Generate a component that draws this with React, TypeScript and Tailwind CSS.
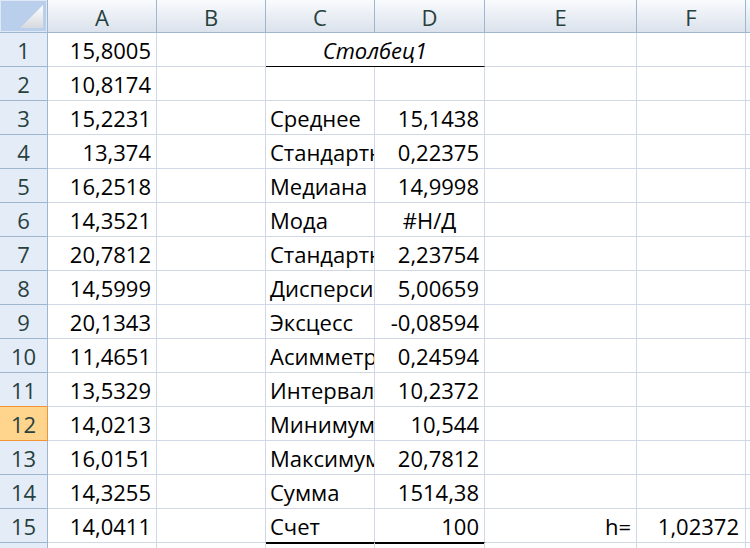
import React from "react";

const A = [
  "15,8005", "10,8174", "15,2231", "13,374", "16,2518", "14,3521", "20,7812", "14,5999",
  "20,1343", "11,4651", "13,5329", "14,0213", "16,0151", "14,3255", "14,0411",
];

const CD: Record<number, [string, string]> = {
  3: ["Среднее", "15,1438"],
  4: ["Стандартная ошибка", "0,22375"],
  5: ["Медиана", "14,9998"],
  6: ["Мода", "#Н/Д"],
  7: ["Стандартное отклонение", "2,23754"],
  8: ["Дисперсия выборки", "5,00659"],
  9: ["Эксцесс", "-0,08594"],
  10: ["Асимметричность", "0,24594"],
  11: ["Интервал", "10,2372"],
  12: ["Минимум", "10,544"],
  13: ["Максимум", "20,7812"],
  14: ["Сумма", "1514,38"],
  15: ["Счет", "100"],
};

const grid = "border-r border-b border-[#d0d7e5]";

function RowHeader({ n }: { n: number }) {
  const selected = n === 12;
  const above = n === 11;
  return (
    <div
      className={
        "w-[48px] shrink-0 border-r border-b flex items-center justify-center text-[#27413e] " +
        (selected
          ? "bg-[#ffd58e] border-r-[#f29436] border-b-[#f29436]"
          : above
          ? "bg-[#e4ecf7] border-r-[#9eb6ce] border-b-[#f29436]"
          : "bg-[#e4ecf7] border-[#9eb6ce]")
      }
    >
      {n}
    </div>
  );
}

function DataRow({ n }: { n: number }) {
  const cd = CD[n];
  const last = n === 15;
  return (
    <div className="flex h-[34px]">
      <RowHeader n={n} />
      <div className={"w-[109px] shrink-0 flex items-center justify-end pr-[5px] " + grid}>{A[n - 1]}</div>
      <div className={"w-[109px] shrink-0 " + grid}></div>
      {n === 1 ? (
        <div className="w-[219px] shrink-0 flex items-center justify-center italic border-r border-r-[#d0d7e5] border-b border-b-black">
          Столбец1
        </div>
      ) : (
        <>
          <div
            className={
              "w-[109px] shrink-0 flex items-center pl-[4px] overflow-hidden whitespace-nowrap " +
              (last
                ? "border-r border-r-[#d0d7e5] border-b border-b-black shadow-[0_1px_0_0_#000]"
                : grid)
            }
          >
            {cd ? cd[0] : ""}
          </div>
          <div
            className={
              "w-[110px] shrink-0 flex items-center overflow-hidden whitespace-nowrap " +
              (cd && cd[1] === "#Н/Д" ? "justify-center " : "justify-end pr-[5px] ") +
              (last
                ? "border-r border-r-[#d0d7e5] border-b border-b-black shadow-[0_1px_0_0_#000]"
                : grid)
            }
          >
            {cd ? cd[1] : ""}
          </div>
        </>
      )}
      <div className={"w-[152px] shrink-0 flex items-center justify-end pr-[5px] " + grid}>{last ? "h=" : ""}</div>
      <div className={"w-[109px] shrink-0 flex items-center justify-end pr-[6px] " + grid}>{last ? "1,02372" : ""}</div>
      <div className="flex-1 border-b border-[#d0d7e5]"></div>
    </div>
  );
}

const hdr =
  "shrink-0 flex items-center justify-center pt-[2px] border-r border-b border-[#9eb6ce] bg-linear-to-b from-[#f9fbfd] to-[#dbe2ec] text-[#27413e]";

export default function App() {
  return (
    <div className="w-[750px] h-[548px] overflow-hidden bg-white text-black text-[22px] leading-none font-['Open_Sans',sans-serif]">
      <div className="flex h-[33px]">
        <div className="w-[48px] shrink-0 border-r border-b border-[#9eb6ce] bg-[#c9d9ee]">
          <svg width="47" height="32" viewBox="0 0 47 32">
            <defs>
              <linearGradient id="tri" x1="0" y1="0" x2="0" y2="1">
                <stop offset="0" stopColor="#ffffff" />
                <stop offset="1" stopColor="#d6d9de" />
              </linearGradient>
            </defs>
            <rect x="0.5" y="0.5" width="46" height="31" fill="#b9cfeb" stroke="#dfe9f6" />
            <polygon points="43,5 43,28 20,28" fill="url(#tri)" />
          </svg>
        </div>
        <div className={"w-[109px] " + hdr}>A</div>
        <div className={"w-[109px] " + hdr}>B</div>
        <div className={"w-[109px] " + hdr}>C</div>
        <div className={"w-[110px] " + hdr}>D</div>
        <div className={"w-[152px] " + hdr}>E</div>
        <div className={"w-[109px] " + hdr}>F</div>
        <div className="flex-1 border-b border-[#9eb6ce] bg-linear-to-b from-[#f9fbfd] to-[#dbe2ec]"></div>
      </div>
      {Array.from({ length: 15 }, (_, i) => (
        <DataRow key={i} n={i + 1} />
      ))}
      <div className="flex h-[10px]">
        <div className="w-[48px] shrink-0 border-r border-[#9eb6ce] bg-[#e4ecf7]"></div>
        <div className="w-[109px] shrink-0 border-r border-[#d0d7e5]"></div>
        <div className="w-[109px] shrink-0 border-r border-[#d0d7e5]"></div>
        <div className="w-[109px] shrink-0 border-r border-[#d0d7e5]"></div>
        <div className="w-[110px] shrink-0 border-r border-[#d0d7e5]"></div>
        <div className="w-[152px] shrink-0 border-r border-[#d0d7e5]"></div>
        <div className="w-[109px] shrink-0 border-r border-[#d0d7e5]"></div>
        <div className="flex-1"></div>
      </div>
    </div>
  );
}
